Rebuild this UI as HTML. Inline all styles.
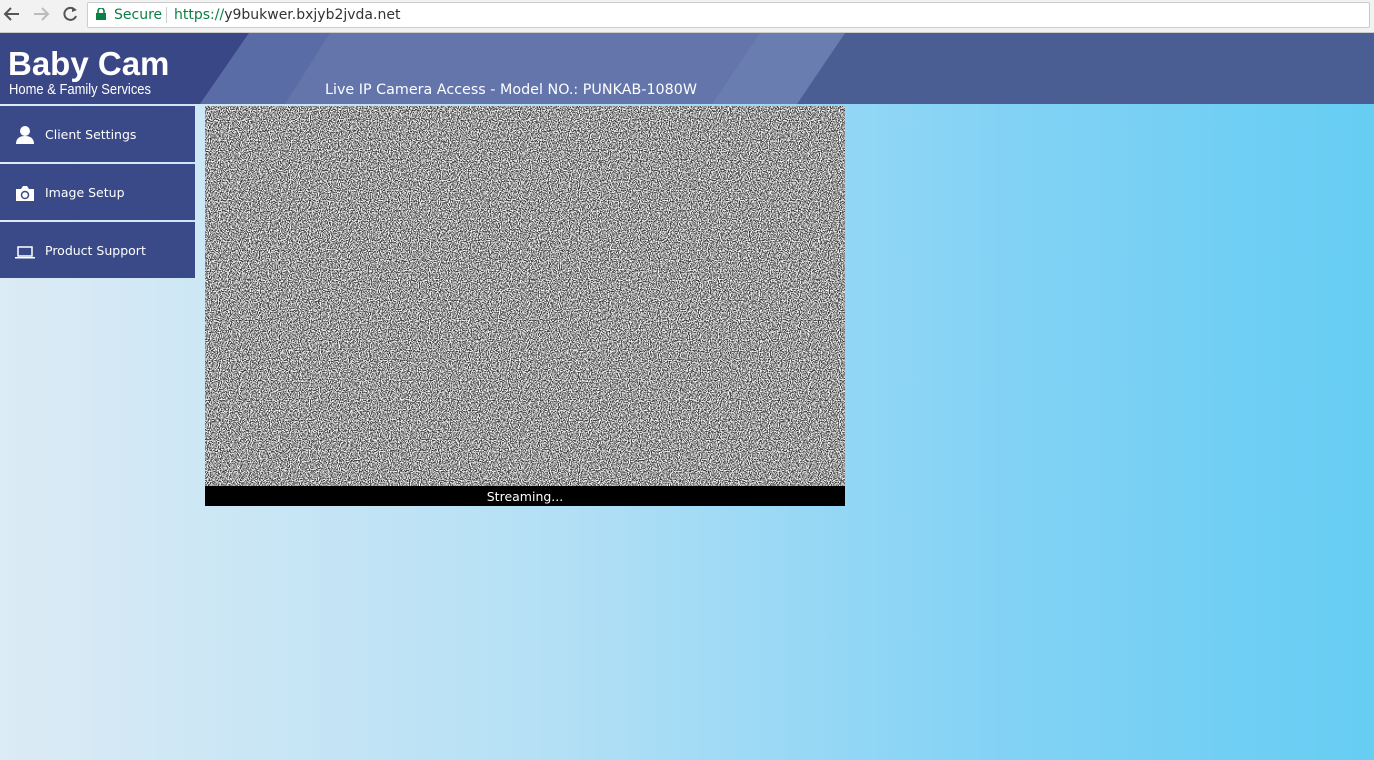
<!DOCTYPE html>
<html><head><meta charset="utf-8"><style>
*{margin:0;padding:0;box-sizing:border-box}
body{width:1374px;height:760px;overflow:hidden;font-family:"DejaVu Sans","Liberation Sans",sans-serif;background:linear-gradient(90deg,#dcebf5 0%,#b4e0f5 40%,#86d3f5 70%,#66cdf3 100%);position:relative}
.bar{position:absolute;left:0;top:0;width:1374px;height:33px;background:#f2f2f2;border-bottom:1px solid #ccc}
.url{position:absolute;left:87px;top:2px;width:1283px;height:26px;background:#fff;border:1px solid #ccc;border-radius:2px;font-size:14px;line-height:24px}
.hdr{position:absolute;left:0;top:33px;width:1374px;height:71px}
.nav{position:absolute;left:0;width:195px;height:56px;background:#3a4a89;color:#fff;font-size:12.5px}
.nav span{position:absolute;left:45px;top:21px}
.nav svg{position:absolute;left:15px;top:19px}
</style></head><body>
<div class="bar">
<svg width="90" height="33" style="position:absolute;left:0;top:0"><path d="M19 14H6M11 8l-6 6 6 6" stroke="#555" stroke-width="2" fill="none"/><path d="M34 14h13M42 8l6 6-6 6" stroke="#bbb" stroke-width="2" fill="none"/><path d="M75 10a6 6 0 1 0 1 6" stroke="#555" stroke-width="2" fill="none"/><path d="M72 7l5 3-5 2z" fill="#555"/></svg>
<div class="url"><svg width="10" height="12" style="position:absolute;left:8px;top:5px"><rect x="0" y="5" width="10" height="7" fill="#0b8043"/><path d="M2 5V3a3 3 0 0 1 6 0v2" stroke="#0b8043" stroke-width="1.6" fill="none"/></svg><span style="position:absolute;left:26px;color:#0b8043">Secure</span><span style="position:absolute;left:78px;top:4px;width:1px;height:16px;background:#ccc"></span><span style="position:absolute;left:86px;color:#333;white-space:nowrap"><span style="color:#0b8043">https://</span>y9bukwer.bxjyb2jvda.net</span></div>
</div>
<svg class="hdr" width="1374" height="71">
<rect width="1374" height="71" fill="#4a5e93"/>
<polygon points="0,0 249,0 200,71 0,71" fill="#3a4787"/>
<polygon points="249,0 845,0 797,71 200,71" fill="#5a6ca5"/>
<polygon points="330,0 760,0 712,71 285,71" fill="#6578ad" opacity=".8"/>
<polygon points="760,0 845,0 797,71 712,71" fill="#6a7db0"/>
<text x="8" y="42" fill="#fff" font-family="Liberation Sans" font-size="33" font-weight="bold">Baby Cam</text>
<text x="9" y="61" fill="#fff" font-family="Liberation Sans" font-size="15" textLength="142" lengthAdjust="spacingAndGlyphs">Home &amp; Family Services</text>
<text x="325" y="61" fill="#fff" font-family="DejaVu Sans" font-size="14" textLength="372" lengthAdjust="spacingAndGlyphs">Live IP Camera Access - Model NO.: PUNKAB-1080W</text>
</svg>
<div class="nav" style="top:106px"><svg width="20" height="20"><circle cx="10" cy="6" r="5" fill="#fff"/><path d="M1 19c0-6 4-8 9-8s9 2 9 8z" fill="#fff"/></svg><span>Client Settings</span></div>
<div class="nav" style="top:164px"><svg width="20" height="20"><path d="M1 6h5l2-3h4l2 3h5v12H1z" fill="#fff"/><circle cx="10" cy="12" r="3.5" fill="none" stroke="#3a4a89" stroke-width="1.5"/></svg><span>Image Setup</span></div>
<div class="nav" style="top:222px"><svg width="20" height="20"><rect x="3" y="6" width="14" height="9" fill="none" stroke="#fff" stroke-width="1.5"/><rect x="0" y="16" width="20" height="1.5" fill="#fff"/></svg><span>Product Support</span></div>
<svg style="position:absolute;left:205px;top:106px" width="640" height="380">
<filter id="n" x="0" y="0" width="100%" height="100%"><feTurbulence type="fractalNoise" baseFrequency="0.9" numOctaves="1" seed="3"/><feColorMatrix type="matrix" values="0 0 0 0 0  0 0 0 0 0  0 0 0 0 0  1 0 0 0 0"/><feComponentTransfer><feFuncA type="linear" slope="4" intercept="-1.5"/></feComponentTransfer></filter>
<rect width="640" height="380" fill="#ffffff"/>
<rect width="640" height="380" fill="#000" filter="url(#n)" opacity=".8"/>
</svg>
<div style="position:absolute;left:205px;top:486px;width:640px;height:20px;background:#000;color:#fff;font-size:12.5px;text-align:center;line-height:22px">Streaming...</div>
</body></html>
